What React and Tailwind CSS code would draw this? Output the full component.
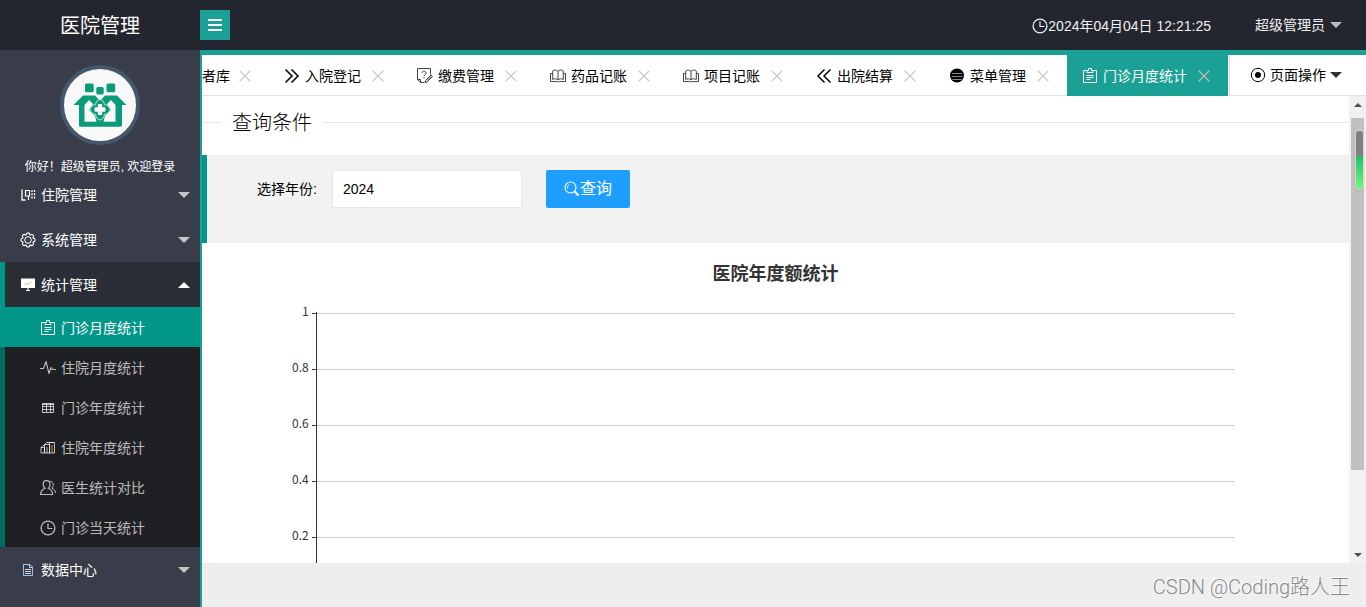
import React, { useState } from 'react';

const Svg = ({ children, className = 'w-4 h-4', ...rest }) => (
  <svg
    viewBox="0 0 16 16"
    fill="none"
    stroke="currentColor"
    strokeWidth="1"
    className={`shrink-0 ${className}`}
    aria-hidden="true"
    {...rest}
  >
    {children}
  </svg>
);

const WardIcon = () => (
  <Svg>
    <path d="M2 2.500v10.500h3.500" strokeWidth="1.300" />
    <path d="M5.500 3.500v5.500h4V3.500zM8.500 9v4" strokeWidth="1.200" />
    <path d="M12 3v10M14.500 3v10" strokeDasharray="2 1.300" strokeWidth="1.300" />
  </Svg>
);

const GearIcon = () => (
  <Svg>
    <circle cx="8" cy="8" r="3.300" />
    <path
      d="M6.300 2.700c0-2.400 3.400-2.400 3.400 0l.8.300c1.700-1.700 4.200.8 2.500 2.500l.3.800c2.400 0 2.400 3.400 0 3.400l-.3.800c1.700 1.700-.8 4.200-2.500 2.500l-.8.300c0 2.400-3.400 2.400-3.400 0l-.8-.3c-1.700 1.700-4.200-.8-2.500-2.500l-.3-.8c-2.400 0-2.400-3.400 0-3.400l.3-.8C1.300 3.800 3.800 1.300 5.500 3z"
      strokeWidth="1.100"
    />
  </Svg>
);

const BoardIcon = () => (
  <Svg>
    <path d="M1 1.500h14V11H1z" fill="currentColor" stroke="none" />
    <path d="M8 11v2.500M6 13.500h4" strokeWidth="1.200" />
    <path d="m4.500 8 2-1.500L8 7.500l3.500-2.500" stroke="#bbb" />
  </Svg>
);

const ClipboardIcon = () => (
  <Svg>
    <path d="M5 2.500H1.500v12h13v-12H11" />
    <path d="M5 4.500v-2h1.500V.5h3v2H11v2z" />
    <path d="M4.500 7.500h7M4.500 9.500h7M4.500 11.500h4" />
  </Svg>
);

const PulseIcon = () => (
  <Svg>
    <path d="M0 8.500h3.500L6 1.500l3 12 2-6 1.500 2H16" strokeWidth="1.100" strokeLinejoin="round" />
  </Svg>
);

const TableIcon = () => (
  <Svg>
    <path d="M2.500 3.500h11v9h-11zM2.500 6.500h11M2.500 9.500h11M6.500 3.500v9M10.500 3.500v9" />
    <path d="M2 4.500h12" />
  </Svg>
);

const ChartIcon = () => (
  <Svg>
    <path d="M1 7.500h3.500v5.500H1zM4.500 4.500h5V13h-5zM9.500 2.500h5V13h-5z" />
    <path d="m4.500 4.500 2-2h8M1 7.500l2-2h1.500M7 7v6" />
    <path d="M12 5v8" stroke="#c9a227" />
  </Svg>
);

const PeopleIcon = () => (
  <Svg>
    <path d="M6.500.7C4.300.7 3.200 2.500 3.200 4.500c0 1.600.7 3 1.800 3.800C2.500 9.500.6 11.500.6 14.500h12c0-3-1.800-5-4.300-6.200 1.100-.8 1.700-2.300 1.700-3.800 0-2-1.200-3.800-3.500-3.800z" strokeWidth="1.200" />
    <path d="M10 1.300c2 .1 3.300 1.500 3.300 3.400 0 1.300-.6 2.500-1.600 3.300 2.200 1 3.700 2.800 3.800 5" />
  </Svg>
);

const ClockIcon = () => (
  <Svg>
    <circle cx="8" cy="8" r="6.900" strokeWidth="1.300" />
    <path d="M8 3.500V8.500h4.500" strokeWidth="1.200" />
  </Svg>
);

const FileIcon = () => (
  <Svg>
    <path d="M3.500 2.500h6.500l2.500 2.500v8.500h-9z" stroke="#9fc3ee" />
    <path d="M9.500 2.500v3h3M5 7.500h6M5 9.500h6M5 11.500h6" stroke="#d0d0d0" />
  </Svg>
);

const ForwardIcon = () => (
  <Svg>
    <path d="m1.500 1.500 6.500 6.500-6.500 6.500M7.500 1.500l6.500 6.500-6.500 6.500" strokeWidth="1.500" />
  </Svg>
);

const BackIcon = () => (
  <Svg>
    <path d="M8.500 1.500 2 8l6.500 6.500M14.500 1.500 8 8l6.500 6.500" strokeWidth="1.500" />
  </Svg>
);

const FeeIcon = () => (
  <Svg className="w-4 h-4 text-[#444]">
    <path d="M7.500 14.500h-4l-3-3V.5h13v6" />
    <path d="M.5 11.500h3v3" />
    <path d="M5 5c0-2.500 4-2.500 4 0 0 1.500-2 1.500-2 3M7 9v1.200" />
    <path d="m8.500 12.500 5.500-5.500 1.500 1.500-5.500 5.500-2 .5zM10 12.500l4-4" />
  </Svg>
);

const BookIcon = () => (
  <Svg className="w-4 h-4 text-[#444]">
    <path d="M8 3.500C7 1.700 3.500 1.700 2.700 3v8.500c1.300-1 4.300-1 5.300.500 1-1.500 4-1.500 5.300-.500V3c-.8-1.300-4.300-1.300-5.300.5zM8 3.500V12" />
    <path d="M2.500 5.500h-2v8h6l1.500.5 1.500-.5h6v-8h-2" />
  </Svg>
);

const MenuBallIcon = () => (
  <Svg>
    <circle cx="8" cy="7.500" r="7" fill="currentColor" stroke="none" />
    <path d="M3 5.500h10M2.500 8.500h11M3.500 11.500h9" stroke="#8a8a8a" />
  </Svg>
);

const RadioIcon = () => (
  <Svg>
    <circle cx="8" cy="8" r="6.700" />
    <circle cx="8" cy="8" r="3" fill="currentColor" stroke="none" />
  </Svg>
);

const SearchIcon = () => (
  <Svg>
    <circle cx="6.500" cy="6.500" r="5.500" strokeWidth="1.100" />
    <path d="M3.500 7.500c-.5-2 .5-3.500 2-4" strokeWidth=".8" />
    <path d="m10.500 10.500 4 4" strokeWidth="2.200" />
  </Svg>
);

const CloseIcon = () => (
  <Svg className="w-3.5 h-3.5">
    <path d="m2 2 12 12M14 2 2 14" strokeWidth="1.300" />
  </Svg>
);

const Caret = ({ up = false, className = '' }) => (
  <svg viewBox="0 0 12 6" className={`w-3 h-1.5 shrink-0 ${className}`} fill="currentColor" aria-hidden="true">
    <path d={up ? 'M0 6 6 0l6 6z' : 'M0 0h12L6 6z'} />
  </svg>
);

const HospitalLogo = () => (
  <svg viewBox="0 0 54 46" className="w-[54px] h-[46px]" fill="#0a9b78" aria-hidden="true">
    <rect x="12" y="1.500" width="8.700" height="8.700" rx="1.500" />
    <rect x="23.300" y="5" width="7.400" height="7.400" rx="1.500" />
    <rect x="33.500" y="1.500" width="8.700" height="8.700" rx="1.500" />
    <path d="M.5 23 10 13.500h12L27 19l5-5.500h12L53.500 23H49v20c0 1-.8 1.700-1.700 1.700H7.500C6.500 44.700 6 44 6 43V23z" />
    <path d="M11.500 23 16 18l4 4-4 6 6 6 1.500 5.700h-12zM42.500 23 38 18l-4 4 4 6-6 6-1.500 5.700h12z" fill="#f8f8f8" />
    <path
      d="M27 17.500c2 0 4 2 4.500 5 3 .5 5.500 3 5.500 5s-2.500 4.500-5.500 5c-.5 3-2.500 5.500-4.500 5.500s-4-2.500-4.500-5.500c-3-.5-5.500-3-5.500-5s2.500-4.500 5.500-5c.5-3 2.500-5 4.500-5z"
      stroke="#f8f8f8"
      strokeWidth=".8"
    />
    <path d="M25.300 22.500h3.400v3.300h3.300v3.400h-3.300v3.300h-3.400v-3.300H22v-3.400h3.300z" fill="#f8f8f8" stroke="#f8f8f8" strokeLinejoin="round" />
  </svg>
);

const topMenus = [
  { name: '住院管理', icon: WardIcon },
  { name: '系统管理', icon: GearIcon },
];

const statMenus = [
  { name: '门诊月度统计', icon: ClipboardIcon },
  { name: '住院月度统计', icon: PulseIcon },
  { name: '门诊年度统计', icon: TableIcon },
  { name: '住院年度统计', icon: ChartIcon },
  { name: '医生统计对比', icon: PeopleIcon },
  { name: '门诊当天统计', icon: ClockIcon },
];

const tabs = [
  { name: '者库' },
  { name: '入院登记', icon: ForwardIcon },
  { name: '缴费管理', icon: FeeIcon },
  { name: '药品记账', icon: BookIcon },
  { name: '项目记账', icon: BookIcon },
  { name: '出院结算', icon: BackIcon },
  { name: '菜单管理', icon: MenuBallIcon },
  { name: '门诊月度统计', icon: ClipboardIcon },
];

const ticks = ['1', '0.8', '0.6', '0.4', '0.2'];

const NavItem = ({ name, icon: Icon }) => (
  <a href="#" className="flex items-center h-[45px] pl-5 pr-2.5 gap-[5px] text-white">
    <Icon />
    <span>{name}</span>
    <Caret className="ml-auto text-white/70" />
  </a>
);

// Menu boczne
const Sidebar = ({ current, onSelect }) => (
  <aside className="w-[200px] shrink-0 bg-[#393d49] overflow-hidden">
    <div className="flex flex-col items-center h-[122px] pt-[15px]">
      <div className="flex items-center justify-center w-20 h-20 shrink-0 rounded-full border-4 border-[#44576b] bg-[#f8f8f8]">
        <HospitalLogo />
      </div>
      <p className="mt-3 text-xs leading-5 text-white whitespace-nowrap">你好！超级管理员, 欢迎登录</p>
    </div>
    <nav>
      {topMenus.map(item => (
        <NavItem key={item.name} {...item} />
      ))}
      <a
        href="#"
        className="flex items-center h-[45px] pl-[15px] pr-2.5 gap-[5px] text-white bg-[#2b2e37] border-l-[5px] border-[#009688]"
      >
        <BoardIcon />
        <span>统计管理</span>
        <Caret up className="ml-auto" />
      </a>
      <ul className="bg-[#1f2024]">
        {statMenus.map(({ name, icon: Icon }) => (
          <li key={name}>
            <a
              href="#"
              onClick={() => onSelect(name)}
              className={`flex items-center h-10 pt-px pl-[35px] gap-[5px] border-l-[5px] ${
                name === current
                  ? 'bg-[#009688] border-[#009688] text-white'
                  : 'border-[#006b61] text-white/70'
              }`}
            >
              <Icon />
              <span>{name}</span>
            </a>
          </li>
        ))}
      </ul>
      <NavItem name="数据中心" icon={FileIcon} />
    </nav>
  </aside>
);

// Pasek zakładek
const TabBar = ({ current, onSelect }) => (
  <div className="flex h-[41px] shrink-0 bg-white">
    <ul className="flex flex-1 min-w-0 justify-end overflow-hidden">
      {tabs.map(({ name, icon: Icon }) => (
        <li
          key={name}
          className={`flex items-center shrink-0 pt-0.5 pr-[17px] border-b ${Icon ? 'pl-[15px]' : ''} ${
            name === current ? 'bg-[#1aa094] border-[#1aa094] text-white' : 'border-[#e2e2e2] text-black'
          }`}
        >
          <button type="button" onClick={() => onSelect(name)} className="flex items-center gap-[5px] whitespace-nowrap">
            {Icon && <Icon />}
            {name}
          </button>
          <button
            type="button"
            aria-label="关闭"
            className={`${Icon ? 'ml-2.5' : 'ml-2'} ${name === current ? 'text-[#c2c2c2]' : 'text-[#c8c8c8]'}`}
          >
            <CloseIcon />
          </button>
        </li>
      ))}
    </ul>
    <button
      type="button"
      className="flex items-center w-[137px] ml-px pl-5 shrink-0 gap-1 border-l border-b border-[#e2e2e2] text-black"
    >
      <RadioIcon />
      <span>页面操作</span>
      <Caret className="text-[#333]" />
    </button>
  </div>
);

const YearChart = () => (
  <svg className="w-full h-[360px]" shapeRendering="crispEdges" role="img">
    <text x="50%" y="37" textAnchor="middle" className="text-lg font-bold fill-[#333]">
      医院年度额统计
    </text>
    {ticks.map((tick, i) => {
      const y = 70 + i * 56;
      return (
        <g key={tick}>
          <line x1="10%" x2="90%" y1={y + 0.5} y2={y + 0.5} stroke="#ccc" />
          <svg x="10%" y={y} overflow="visible">
            <line x1="-5" x2="0" y1="0.5" y2="0.5" stroke="#333" />
            <text x="-8" y="3" textAnchor="end" className="text-xs fill-[#333] font-['Noto_Sans_CJK_SC',sans-serif]">
              {tick}
            </text>
          </svg>
        </g>
      );
    })}
    <line x1="10%" x2="10%" y1="69" y2="350" stroke="#333" />
  </svg>
);

const ScrollBar = () => (
  <div className="relative flex flex-col items-center w-[17px] shrink-0 bg-[#f1f1f1] pt-[7px] pb-1.5">
    <svg viewBox="0 0 8 4" className="w-2 h-1 mb-[11px] shrink-0" fill="#505050" aria-hidden="true">
      <path d="M0 4 4 0l4 4z" />
    </svg>
    <div className="w-[13px] h-[352px] bg-[#c1c1c1]" />
    <svg viewBox="0 0 8 4" className="w-2 h-1 mt-auto shrink-0" fill="#505050" aria-hidden="true">
      <path d="M0 0h8L4 4z" />
    </svg>
    {/* wskaźnik obciążenia */}
    <div className="absolute right-[2px] top-[34px] flex flex-col w-[9px] h-[60px] rounded border border-[#d5d5d5] overflow-hidden shadow">
      <div className="h-[25px] bg-[#808080]" />
      <div className="flex-1 bg-gradient-to-b from-[#1fc168] to-[#72f57c]" />
    </div>
  </div>
);

const App = () => {
  const [current, setCurrent] = useState('门诊月度统计');
  const [year, setYear] = useState('2024');

  return (
    <div className="flex flex-col h-screen overflow-hidden text-sm font-['Liberation_Sans','Noto_Sans_CJK_SC',sans-serif]">
      <header className="flex items-center h-[50px] shrink-0 bg-[#23262e] text-white">
        <h1 className="w-[200px] pt-0.5 text-xl text-center">医院管理</h1>
        <button
          type="button"
          aria-label="菜单"
          className="flex items-center justify-center w-[30px] h-[30px] bg-[#1aa094]"
        >
          <Svg>
            <path d="M1 3h14M1 8h14M1 13h14" strokeWidth="2" />
          </Svg>
        </button>
        <div className="flex items-center ml-auto pt-0.5 text-[#f0f0f0]">
          <ClockIcon />
          <span>2024年04月04日 12:21:25</span>
        </div>
        <button type="button" className="flex items-center gap-[5px] ml-11 mr-6 text-[#f0f0f0]">
          超级管理员
          <Caret className="text-white/70" />
        </button>
      </header>

      <div className="flex flex-1 min-h-0">
        <Sidebar current={current} onSelect={setCurrent} />

        <main className="flex flex-col flex-1 min-w-0 border-l-2 border-t-[5px] border-[#1aa094]">
          <TabBar current={current} onSelect={setCurrent} />

          <div className="flex flex-1 min-h-0 bg-white">
            <div className="flex-1 min-w-0 overflow-hidden">
              <div className="flex items-center h-[59px] pb-1.5">
                <span className="w-5 h-px bg-[#e6e6e6]" />
                <h2 className="px-2.5 pb-0.5 text-xl font-light text-black font-['Noto_Sans_CJK_SC',sans-serif]">查询条件</h2>
                <span className="flex-1 h-px bg-[#e6e6e6]" />
              </div>

              <form
                className="flex items-start h-[88px] pt-[15px] pl-[50px] bg-[#f2f2f2] border-l-[5px] border-[#009688]"
                onSubmit={e => e.preventDefault()}
              >
                <label htmlFor="year" className="w-[75px] leading-[38px]">
                  选择年份:
                </label>
                <input
                  id="year"
                  type="text"
                  value={year}
                  onChange={e => setYear(e.target.value)}
                  className="w-[190px] h-[38px] px-2.5 bg-white border border-[#e6e6e6] rounded-xs"
                />
                <button
                  type="submit"
                  className="flex items-center justify-center w-[84px] h-[38px] ml-6 rounded-xs bg-[#1e9fff] text-base text-white"
                >
                  <SearchIcon />
                  查询
                </button>
              </form>

              <YearChart />
            </div>
            <ScrollBar />
          </div>

          <footer className="flex items-center justify-end h-11 shrink-0 pt-1 pr-4 bg-[#eee]">
            <span className="text-xl font-light text-[#888] font-['Roboto','Noto_Sans_CJK_SC',sans-serif] [text-shadow:-1px_-1px_0_#fff]">
              CSDN @Coding路人王
            </span>
          </footer>
        </main>
      </div>
    </div>
  );
};

export default App;
